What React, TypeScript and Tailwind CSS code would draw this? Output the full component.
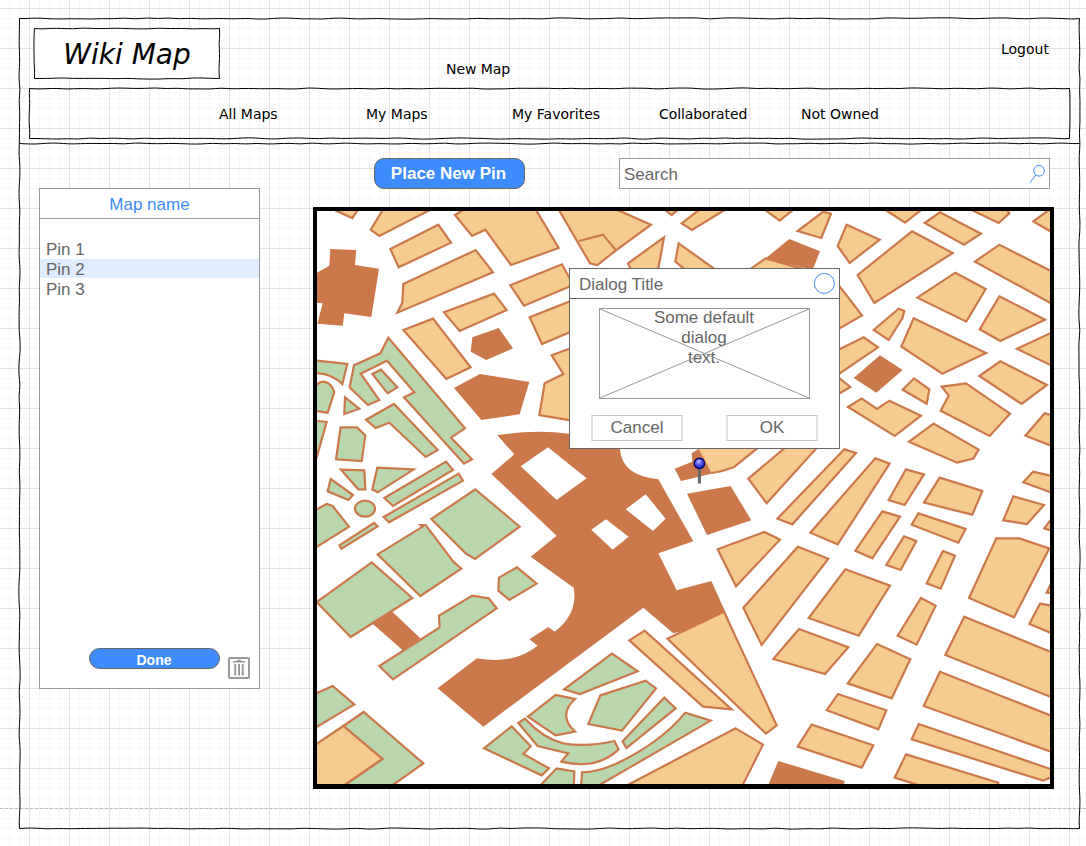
import type { ReactNode } from "react";

/* Hand-drawn line: smooth quadratic segments with small deterministic offsets. */
function wobble(x1: number, y1: number, x2: number, y2: number, seed: number) {
  const length = Math.hypot(x2 - x1, y2 - y1);
  const steps = Math.max(3, Math.round(length / 11));
  const dx = (x2 - x1) / length;
  const dy = (y2 - y1) / length;
  let state = seed * 7919 + 17;
  const next = () => {
    state = (state * 1103515245 + 12345) % 2147483648;
    return (state / 2147483648 - 0.5) * 1.4;
  };
  const at = (distance: number, offset: number) =>
    `${(x1 + dx * distance - dy * offset).toFixed(2)} ${(y1 + dy * distance + dx * offset).toFixed(2)}`;
  let d = `M${x1} ${y1}`;
  let offset = next();
  for (let i = 1; i <= steps; i++) {
    const following = next();
    const end = i === steps ? 0 : (offset + following) / 2;
    d += ` Q${at(((i - 0.5) / steps) * length, offset)} ${at((i / steps) * length, end)}`;
    offset = following;
  }
  return d;
}

function SketchBorder({ w, h, seed, fill = "none" }: { w: number; h: number; seed: number; fill?: string }) {
  const r = w - 0.5;
  const b = h - 0.5;
  return (
    <svg className="pointer-events-none absolute inset-0 overflow-visible" width={w} height={h} fill="none" stroke="#000" strokeWidth="1">
      {fill !== "none" && <rect x=".5" y=".5" width={w - 1} height={h - 1} fill={fill} stroke="none" />}
      <path d={wobble(0.5, 0.5, r, 0.5, seed)} />
      <path d={wobble(r, 0.5, r, b, seed + 1)} />
      <path d={wobble(0.5, b, r, b, seed + 2)} />
      <path d={wobble(0.5, 0.5, 0.5, b, seed + 3)} />
    </svg>
  );
}

/* Map blocks are drafted in tiles at three units per pixel. */
function Tile({ x, y, children }: { x: number; y: number; children: ReactNode }) {
  return <g transform={`translate(${x} ${y}) scale(.33333)`}>{children}</g>;
}

const SAND = "#f5cb8f";
const PARK = "#bad6af";
const BRICK = "#cb784b";

function Blocks({ fill, items }: { fill: string; items: string[] }) {
  return (
    <>
      {items.map((p) => (
        <polygon key={p} points={p} fill={fill} stroke={fill === BRICK ? "none" : BRICK} strokeWidth="6.6" />
      ))}
    </>
  );
}

function CityMap() {
  return (
    <svg className="block" width="733" height="573" viewBox="317 211 733 573">
      <rect x="317" y="211" width="733" height="573" fill="#fff" />
      <Tile x={310} y={390}>
        <path
          fill={BRICK}
          d="M562 136 Q670 118 778 131 L930 135 L930 178 Q935 257 1045 268 L1150 454 L1045 490 L1100 601 L1204 573 L1257 690 L1090 730 L1000 653 L520 1010 L383 895 L501 805 Q610 825 683 767 L658 748 L715 711 L734 725 Q805 670 791 593 L662 500 L740 437 L544 252 L613 193 Z"
        />
        <polygon fill="#fff" points="632,229 714,172 830,265 740,330" />
        <Blocks
          fill={PARK}
          items={[
            "105,22 148,56 103,72",
            "168,89 252,42 383,180 347,201 238,98 197,114",
            "92,112 141,112 166,136 155,213 78,208",
            "12,92 50,96 20,202 12,202",
            "93,239 163,241 166,298 145,298",
            "202,233 311,238 203,307 187,298",
            "62,267 129,315 115,330 53,304",
            "10,364 50,342 68,348 117,410 10,477",
            "223,324 408,215 429,240 249,348",
            "221,381 446,251 459,272 237,397",
            "88,466 192,399 203,409 94,476",
            "364,387 496,298 629,410 495,507 467,490",
            "203,493 338,410 332,405 347,405 430,515 454,536 331,618",
            "567,563 621,532 680,581 598,630 565,602",
          ]}
        />
        <ellipse cx="165" cy="356" rx="30" ry="24" fill={PARK} stroke={BRICK} strokeWidth="6.6" />
      </Tile>
      <Tile x={310} y={200}>
        <Blocks
          fill={SAND}
          items={[
            "60,20 78,32 127,54 145,28 145,20",
            "225,20 217,32 182,89 208,108 352,34 380,20",
            "241,147 385,74 423,128 266,202",
            "280,252 497,150 549,217 262,338 277,308",
            "435,45 475,20 672,20 746,144 603,195 526,89 486,108",
            "280,390 369,356 482,502 409,537",
            "402,337 552,281 590,330 449,393",
            "601,256 756,193 790,255 642,317",
            "659,352 800,296 800,388 696,432",
            "725,466 800,438 800,664 688,645 704,550 760,522",
          ]}
        />
        <Blocks
          fill={BRICK}
          items={[
            "61,147 139,150 135,195 207,206 184,351 103,340 98,377 22,371 38,310 15,308 15,222 58,197",
            "487,412 566,384 609,445 529,480 482,455",
            "432,564 510,522 658,546 629,643 514,660",
          ]}
        />
        <Blocks
          fill={PARK}
          items={[
            "235,413 465,685 423,713 486,778 462,791 282,592 313,577 231,482 152,521 208,600 174,615 119,562 132,496 211,460",
            "187,522 213,509 262,562 233,580",
          ]}
        />
        <g fill={PARK} stroke={BRICK} strokeWidth="6.6">
          <path d="M10 481 L112 492 L97 552 Q65 519 10 519Z" />
          <path d="M10 572 Q20 545 42 545 Q64 549 73 576 L53 638 L10 632Z" />
        </g>
      </Tile>
      <Tile x={310} y={590}>
        <Blocks fill={BRICK} items={["186,100 247,65 331,145 280,182"]} />
        <Blocks
          fill={PARK}
          items={[
            "185,-83 307,24 122,141 20,36",
            "208,228 389,112 387,77 487,17 536,25 560,55 249,268",
            "10,314 68,288 133,343 10,417",
            "100,408 161,366 340,520 250,584 225,602 80,602 217,507",
            "522,475 605,409 662,469 640,492 717,535 695,556",
          ]}
        />
        <Blocks fill={SAND} items={["10,468 100,408 217,507 105,584 78,602 10,602"]} />
      </Tile>
      <Tile x={560} y={200}>
        <Blocks
          fill={SAND}
          items={[
            "-9,20 90,190 112,195 168,151 273,74 150,20",
            "305,22 335,45 365,20",
            "365,70 430,20 510,20 396,90",
            "602,20 659,62 709,22",
            "204,190 312,112 295,205 220,225",
            "356,130 465,208 400,230 346,185",
            "560,215 617,175 760,215",
            "713,93 790,35 813,41 784,114",
          ]}
        />
        <path d="M57 123 L129 104 L168 151" fill="none" stroke={BRICK} strokeWidth="6.6" />
        <Blocks fill={BRICK} items={["617,175 688,117 780,154 758,209"]} />
      </Tile>
      <Tile x={560} y={440}>
        <Blocks fill={BRICK} items={["344,86 397,65 395,40 420,24 460,100 363,123", "381,161 512,138 574,241 441,285"]} />
        <polygon fill={SAND} points="417,28 417,10 610,10 588,28 521,82 495,90 455,99" />
        <path d="M610 10 L588 28 L521 82 Q490 94 455 99" fill="none" stroke={BRICK} strokeWidth="6.6" />
        <Blocks
          fill={SAND}
          items={[
            "565,116 700,2 790,2 620,190",
            "652,236 853,28 888,39 697,253",
            "473,328 613,276 660,299 528,439",
            "714,320 805,356 605,615 550,503",
          ]}
        />
        <polygon fill="#fff" points="197,208 257,163 317,236 279,273" />
        <polygon fill="#fff" points="94,269 138,238 206,290 158,329" />
      </Tile>
      <Tile x={560} y={610}>
        <Blocks
          fill={SAND}
          items={[
            "322,86 492,5 650,346 618,371",
            "208,91 254,62 515,298 429,290",
            "527,355 609,404 538,545 165,545",
          ]}
        />
        <Blocks
          fill={PARK}
          items={[
            "12,238 156,131 233,184 60,252",
            "121,256 257,212 288,235 186,362 85,342",
            "188,394 313,263 347,295 199,414",
            "-80,548 -10,475 43,484 41,548",
          ]}
        />
        <g fill={PARK} stroke={BRICK} strokeWidth="6.6">
          <path d="M-96 320 L-13 255 L45 267 Q-8 315 45 365 L-13 376Z" />
          <path d="M-125 339 L-105 326 Q-50 385 10 400 Q80 412 163 393 L176 418 Q110 481 4 455 L25 430 L-67 408Z" />
          <path d="M66 487 Q110 487 165 463 Q300 400 376 308 L452 332 L120 524 L85 545 L62 545Z" />
        </g>
      </Tile>
      <Tile x={806} y={200}>
        <Blocks
          fill={SAND}
          items={[
            "122,74 221,119 131,189 95,138",
            "223,20 297,68 358,20",
            "318,94 440,159 205,309 155,225",
            "356,69 402,37 525,101 474,134",
            "475,20 505,34 578,69 610,40 595,20",
            "682,64 745,18 745,101",
            "507,185 580,134 745,218 745,315",
            "334,293 448,218 539,267 481,365",
            "580,289 717,359 583,423 521,388",
            "90,245 168,346 90,391",
            "203,390 278,326 295,333 289,355 248,420",
            "323,355 540,459 409,521 286,440",
            "90,453 173,412 216,442 90,528",
            "90,526 133,561 90,586",
            "290,569 324,535 370,568 362,611",
            "407,560 480,550 612,641 551,708 404,632 428,587",
            "126,621 167,596 213,627 250,602 345,647 266,708",
            "383,671 518,749 502,776 453,788 309,725",
            "520,528 583,484 723,555 647,612",
            "633,446 745,394 745,501",
            "658,707 716,640 745,647 745,741",
            "208,775 251,791 95,1033 13,998",
            "300,808 354,823 296,915 248,900",
            "681,815 745,830 745,881 652,847",
          ]}
        />
        <Blocks fill={BRICK} items={["143,534 222,466 290,510 211,578"]} />
      </Tile>
      <Tile x={806} y={480}>
        <Blocks
          fill={SAND}
          items={[
            "401,-7 529,33 499,104 354,68",
            "229,94 282,110 199,235 148,212",
            "337,100 479,147 457,188 317,134",
            "294,169 331,183 284,270 241,255",
            "411,213 447,227 404,326 362,310",
            "345,354 389,377 332,494 275,467",
            "571,175 640,175 730,205 624,412 489,354",
            "622,49 714,75 663,132 592,121",
            "745,105 715,145 745,154",
            "745,290 722,338 745,340",
            "702,371 745,378 745,463 670,432",
            "475,410 745,520 745,655 418,525",
            "402,575 745,711 745,819 353,678",
            "338,732 745,871 745,888 711,902 317,778",
            "300,823 577,908 570,935 400,935 266,893",
            "118,268 252,317 158,467 8,414",
            "-98,537 -21,447 127,502 57,582",
            "213,492 313,538 257,655 125,610",
            "96,642 241,691 217,748 62,691",
            "17,734 202,796 167,863 -25,800",
          ]}
        />
        <Blocks fill={BRICK} items={["-83,843 116,903 108,935 -122,935"]} />
      </Tile>
    </svg>
  );
}

function MapPin() {
  return (
    <svg className="absolute left-[375px] top-[245px]" width="15" height="28" viewBox="0 0 15 28">
      <defs>
        <radialGradient id="pin-head" cx="45%" cy="32%" r="65%">
          <stop offset="0" stopColor="#c4c4ff" />
          <stop offset=".4" stopColor="#6464f5" />
          <stop offset="1" stopColor="#2020c8" />
        </radialGradient>
      </defs>
      <path d="M7.4 12V27.5" stroke="#666" strokeWidth="3" />
      <circle cx="7.4" cy="7.4" r="5.2" fill="url(#pin-head)" stroke="#000066" strokeWidth="1.4" />
    </svg>
  );
}

function Dialog() {
  return (
    <div className="absolute left-[252px] top-[57px] h-[181px] w-[271px] border border-[#666] bg-white text-[17px] text-[#666]">
      <div className="flex h-[30px] items-start justify-between border-b border-[#666] pl-[9px] pr-[4px] pt-[3px]">
        <span className="pt-[3px] leading-5">Dialog Title</span>
        <svg width="22" height="22" viewBox="0 0 22 22">
          <circle cx="11.3" cy="11.4" r="10" fill="none" stroke="#3d8bfd" />
        </svg>
      </div>
      <div className="relative ml-[29px] mt-[9px] h-[91px] w-[211px] border border-[#999] text-center leading-5">
        <svg className="absolute inset-0" width="209" height="89" viewBox="0 0 209 89">
          <path d="M0 0 209 89M209 0 0 89" stroke="#999" />
        </svg>
        <p className="mx-auto -mt-px w-[110px] pr-px">
          Some default
          <br />
          dialog
          <br />
          text.
        </p>
      </div>
      <div className="ml-[21px] mt-[16px] flex gap-[43px]">
        <button className="h-[26px] w-[92px] border border-x-2 border-x-[#e0e0e0] border-y-[#c4c4c4] leading-[22px]">Cancel</button>
        <button className="h-[26px] w-[92px] border border-x-2 border-x-[#e0e0e0] border-y-[#c4c4c4] leading-[22px]">OK</button>
      </div>
    </div>
  );
}

function Sidebar() {
  return (
    <aside className="mt-[44px] flex h-[501px] w-[221px] shrink-0 flex-col border border-[#999] bg-white text-[17px] text-[#666]">
      <h2 className="h-[30px] border-b border-[#999] text-center leading-[31px] text-[#3d8bfd]">Map name</h2>
      <ul className="mt-[20px]">
        <li className="h-[20px] pl-[6px] leading-[22px]">Pin 1</li>
        <li className="h-[19px] bg-[#e0edff] pl-[6px] leading-[22px]">Pin 2</li>
        <li className="h-[20px] pl-[6px] leading-[24px]">Pin 3</li>
      </ul>
      <div className="mb-[9px] mt-auto flex items-start pl-[49px]">
        <button className="h-[21px] w-[131px] rounded-full border border-[#666] bg-[#3d8bfd] pr-px text-[14px] font-bold leading-[22px] text-white">Done</button>
        <svg className="ml-[8px] mt-[9px]" width="22" height="22" viewBox="0 0 22 22" fill="none" stroke="#999">
          <rect x="1" y="1" width="20" height="20" rx="1" strokeWidth="2" />
          <path d="M5 4.8H17M9 3.4H13" strokeWidth="1.4" />
          <path d="M7.2 7V18.5M11 7V18.5M14.8 7V18.5" strokeWidth="2" />
          <path d="M6.2 6.5V18.5M15.8 6.5V18.5" stroke="#ccc" strokeWidth=".6" />
        </svg>
      </div>
    </aside>
  );
}

export default function App() {
  return (
    <div className="relative h-[846px] w-[1086px] overflow-hidden bg-white bg-[image:linear-gradient(to_right,#e2e2e2_1px,transparent_1px),linear-gradient(to_bottom,#e2e2e2_1px,transparent_1px),linear-gradient(to_right,#f6f6f6_1px,transparent_1px),linear-gradient(to_bottom,#f6f6f6_1px,transparent_1px)] bg-[size:40px_40px,40px_40px,10px_10px,10px_10px] bg-[position:29px_8px,29px_8px,9px_8px,9px_8px] pl-[19px] pt-[18px] font-['Liberation_Sans',Arial,sans-serif]">
      <div className="absolute left-0 top-[808px] w-full border-t border-dashed border-[#bdbdbd]" />
      <div className="relative h-[811px] w-[1061px]">
        <SketchBorder w={1061} h={811} seed={3} />
        <header className="relative h-[126px] font-['DejaVu_Sans',Verdana,sans-serif] text-[14px] text-black">
          <svg className="absolute bottom-0 left-0 overflow-visible" width="1061" height="1" fill="none" stroke="#000" strokeWidth="1">
            <path d={wobble(0.5, 0.5, 1060.5, 0.5, 31)} />
          </svg>
          <div className="flex h-[70px] items-start pl-[15px] pt-[10px]">
            <div className="relative h-[51px] w-[186px]">
              <SketchBorder w={186} h={51} seed={11} fill="#fff" />
              <h1 className="relative text-center text-[28px] italic leading-[54px]">Wiki Map</h1>
            </div>
            <a className="ml-[226px] mt-[31px] w-[100px] leading-5 tracking-[-0.05px]">New Map</a>
            <a className="ml-[455px] mt-[11px] leading-5">Logout</a>
          </div>
          <nav className="relative ml-[10px] flex h-[51px] w-[1041px] items-center pl-[190px] pt-[2px]">
            <SketchBorder w={1041} h={51} seed={21} />
            <a className="w-[147px]">All Maps</a>
            <a className="w-[146px]">My Maps</a>
            <a className="w-[147px]">My Favorites</a>
            <a className="w-[142px] tracking-[-0.1px]">Collaborated</a>
            <a>Not Owned</a>
          </nav>
        </header>
        <main className="flex pl-[20px]">
          <Sidebar />
          <section className="ml-[53px] w-[741px] pt-[14px]">
            <div className="flex pl-[61px]">
              <button className="h-[31px] w-[151px] rounded-[10px] border border-[#666] bg-[#3d8bfd] pr-[2px] text-[17px] font-bold leading-[30px] text-white">Place New Pin</button>
              <div className="ml-[94px] flex h-[31px] w-[431px] items-center justify-between border border-[#999] bg-white pl-[4px] pr-[4px] text-[17px] text-[#666]">
                <span className="pt-[2px] leading-5">Search</span>
                <svg width="16" height="20" viewBox="0 0 16 20" fill="none" stroke="#3d8bfd">
                  <circle cx="10.1" cy="6.8" r="5.3" />
                  <path d="M6.8 11 .8 18.8" />
                </svg>
              </div>
            </div>
            <div className="relative mt-[18px] h-[582px] w-[741px] border-4 border-b-5 border-black">
              <CityMap />
              <MapPin />
              <Dialog />
            </div>
          </section>
        </main>
      </div>
    </div>
  );
}
